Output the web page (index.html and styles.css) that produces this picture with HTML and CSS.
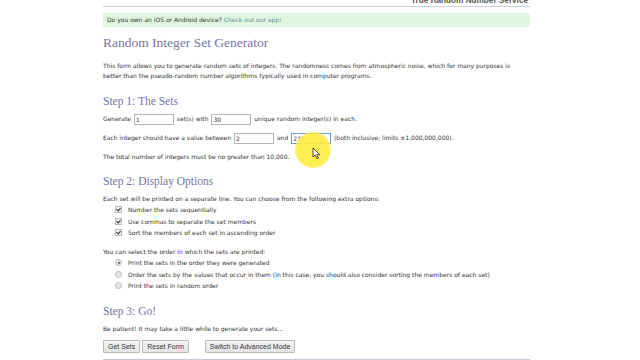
FILE: index.html
```html
<!DOCTYPE html>
<html lang="en">
<head>
    <meta charset="UTF-8">
    <title>RANDOM.ORG - Integer Set Generator</title>
    <link rel="stylesheet" href="styles.css">
</head>
<body>
<div id="page">
    <div id="header">
        <span class="logo">RANDOM.ORG</span>
        <span class="tagline">True Random Number Service</span>
    </div>
    <div id="appBar">Do you own an iOS or Android device? <a href="#">Check out our app!</a></div>

    <h1>Random Integer Set Generator</h1>
    <p class="intro">This form allows you to generate random sets of integers. The randomness comes from atmospheric noise, which for many purposes is better than the pseudo-random number algorithms typically used in computer programs.</p>

    <h2>Step 1: The Sets</h2>
    <p class="row">Generate <input class="num" value="1"> set(s) with <input class="num" value="30"> unique random integer(s) in each.</p>
    <p class="row">Each integer should have a value between <input class="num" value="2"> and <input class="num focus" value="271"> (both inclusive; limits &plusmn;1,000,000,000).</p>
    <p class="row">The total number of integers must be no greater than 10,000.</p>

    <h2>Step 2: Display Options</h2>
    <p class="row">Each set will be printed on a separate line. You can choose from the following extra options:</p>
    <div class="opts">
        <div class="opt"><span class="check"></span>Number the sets sequentially</div>
        <div class="opt"><span class="check"></span>Use commas to separate the set members</div>
        <div class="opt"><span class="check"></span>Sort the members of each set in ascending order</div>
    </div>
    <p class="row">You can select the order in which the sets are printed:</p>
    <div class="opts">
        <div class="opt"><span class="radio on"></span>Print the sets in the order they were generated</div>
        <div class="opt"><span class="radio"></span>Order the sets by the values that occur in them (in this case, you should also consider sorting the members of each set)</div>
        <div class="opt"><span class="radio"></span>Print the sets in random order</div>
    </div>

    <h2>Step 3: Go!</h2>
    <p class="row">Be patient! It may take a little while to generate your sets...</p>
    <div class="buttons">
        <button>Get Sets</button><button>Reset Form</button>
        <button class="advanced">Switch to Advanced Mode</button>
    </div>
    <div id="footer"></div>

    <div class="highlight">
        <svg width="9" height="13" viewBox="0 0 9 13"><path d="M1 1 L1 10 L3.3 8 L5 11.8 L6.4 11.2 L4.8 7.6 L7.8 7.6 Z" fill="#fff" stroke="#222" stroke-width="0.8"/></svg>
    </div>
</div>
</body>
</html>
```

FILE: styles.css
```css
body {
    margin: 0;
    background: #fff;
    font-family: "DejaVu Sans", Verdana, sans-serif;
    font-size: 6px;
    color: #333;
}
#page {
    position: relative;
    width: 427px;
    margin-left: 103px;
    height: 360px;
    overflow: hidden;
}
#header {
    display: flex;
    justify-content: space-between;
    align-items: flex-end;
    height: 6px;
    overflow: hidden;
    border-bottom: 1px solid #cfcfdc;
}
#header .logo {
    font-family: "Liberation Sans", Arial, sans-serif;
    font-size: 30px;
    font-weight: bold;
    letter-spacing: 3px;
    color: #dadada;
    line-height: 1;
    white-space: nowrap;
    margin-bottom: 2px;
}
#header .tagline {
    font-family: "Liberation Sans", Arial, sans-serif;
    font-size: 8.2px;
    font-weight: bold;
    color: #555;
    line-height: 1;
    white-space: nowrap;
    margin-bottom: 1px;
    margin-right: 2px;
}
#appBar {
    margin-top: 6px;
    height: 14px;
    line-height: 14px;
    padding-left: 4px;
    background: #ddf6dd;
    color: #333;
}
#appBar a {
    color: #5f8f92;
    text-decoration: none;
}
h1 {
    font-family: "Liberation Serif", Georgia, serif;
    font-weight: normal;
    font-size: 13.5px;
    color: #7474a6;
    margin: 8px 0 0 0;
    line-height: 16px;
}
h2 {
    font-family: "Liberation Serif", Georgia, serif;
    font-weight: normal;
    font-size: 11.5px;
    color: #7474a6;
    margin: 12px 0 0 0;
    line-height: 14px;
}
p {
    margin: 0;
}
.intro {
    line-height: 10px;
    margin-top: 10px;
    margin-bottom: 13px;
}
.row {
    line-height: 10px;
    margin: 4px 0 8px 0;
}
h2 + .row {
    margin-top: 6px;
}
input.num {
    width: 36px;
    height: 9px;
    padding: 0 1px;
    border: 1px solid #b5b5b5;
    font-family: "DejaVu Sans", Verdana, sans-serif;
    font-size: 6px;
    color: #333;
    vertical-align: middle;
    margin: 0 1px;
}
input.num.focus {
    border-color: #7b9cc8;
}
.opts {
    margin: -8px 0 8.5px 12px;
}
.opt {
    display: flex;
    align-items: center;
    height: 11.5px;
}
.check, .radio {
    display: inline-block;
    width: 5px;
    height: 5px;
    margin-right: 6px;
    border: 1px solid #bbb;
    background: #eee;
    position: relative;
}
.check::after {
    content: "";
    position: absolute;
    left: 1px;
    top: 0;
    width: 2px;
    height: 3px;
    border-right: 1px solid #333;
    border-bottom: 1px solid #333;
    transform: rotate(40deg);
}
.radio {
    border-radius: 50%;
    background: #e6e6e6;
}
.radio.on::after {
    content: "";
    position: absolute;
    left: 1.5px;
    top: 1.5px;
    width: 2px;
    height: 2px;
    border-radius: 50%;
    background: #555;
}
.buttons {
    display: flex;
    gap: 2px;
    margin-top: -2px;
}
button {
    height: 13px;
    padding: 0 4px;
    border: 1px solid #b8b8b8;
    border-radius: 1px;
    background: linear-gradient(#f6f6f6, #e4e4e4);
    font-family: "Liberation Sans", Arial, sans-serif;
    font-size: 7px;
    color: #333;
}
button.advanced {
    margin-left: 14px;
}
#footer {
    margin-top: 6px;
    border-top: 1px solid #c8c8dc;
}
.highlight {
    position: absolute;
    left: 192px;
    top: 132px;
    width: 36px;
    height: 36px;
    border-radius: 50%;
    background: radial-gradient(circle, rgba(255, 236, 60, 0.9) 60%, rgba(255, 240, 80, 0.5) 80%, rgba(255, 240, 80, 0) 100%);
}
.highlight svg {
    position: absolute;
    left: 17px;
    top: 15px;
}
```
